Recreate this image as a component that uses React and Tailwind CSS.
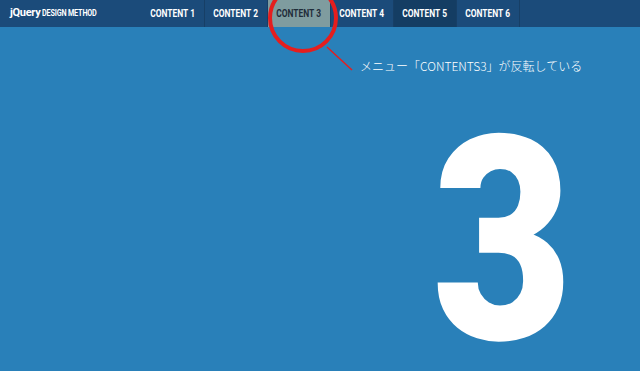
const items = ["CONTENT 1", "CONTENT 2", "CONTENT 3", "CONTENT 4", "CONTENT 5", "CONTENT 6"];

export default function App() {
  return (
    <div className="relative h-[371px] w-[640px] overflow-hidden bg-[#2980b9] font-['Roboto',sans-serif]">
      <header className="flex h-[27px] items-stretch bg-[#1b4b7a]">
        <div className="flex w-[142px] items-center pl-[10px] text-white">
          <span className="text-[11px] font-bold tracking-[-0.3px]">jQuery</span>
          <span className="ml-[2px] inline-block origin-left scale-x-[0.85] text-[8.5px] font-bold tracking-[-0.2px]">DESIGN METHOD</span>
        </div>
        <nav className="flex">
          {items.map((label, i) => {
            const active = i === 2;
            const dark = i === 4;
            return (
              <a
                key={label}
                className={`flex w-[63px] items-center justify-center border-r border-[#173f66] text-[10px] font-bold ${
                  active ? "bg-[#7f9c9f] text-[#1f2d3a]" : dark ? "bg-[#143d63] text-white" : "text-white"
                }`}
              >
                <span className="inline-block scale-x-[0.84] whitespace-nowrap">{label}</span>
              </a>
            );
          })}
        </nav>
      </header>

      <div className="flex justify-end">
        <div className="mr-[72px] mt-[72px] h-[270px] origin-right scale-x-[0.85] text-[286px] font-black leading-none tracking-[-6px] text-white">3</div>
      </div>

      <div className="absolute left-[268px] top-[-17px] h-[70px] w-[70px] rounded-full border-4 border-[#e51e1e]" />
      <svg className="absolute left-0 top-0" width="640" height="371">
        <line x1="327" y1="47" x2="352" y2="70" stroke="#e51e1e" strokeWidth="1.5" />
      </svg>
      <div className="absolute left-[360px] top-[57px] font-['Noto_Sans_CJK_JP',sans-serif] text-[12px] font-light text-white">
        メニュー「CONTENTS3」が反転している
      </div>
    </div>
  );
}
